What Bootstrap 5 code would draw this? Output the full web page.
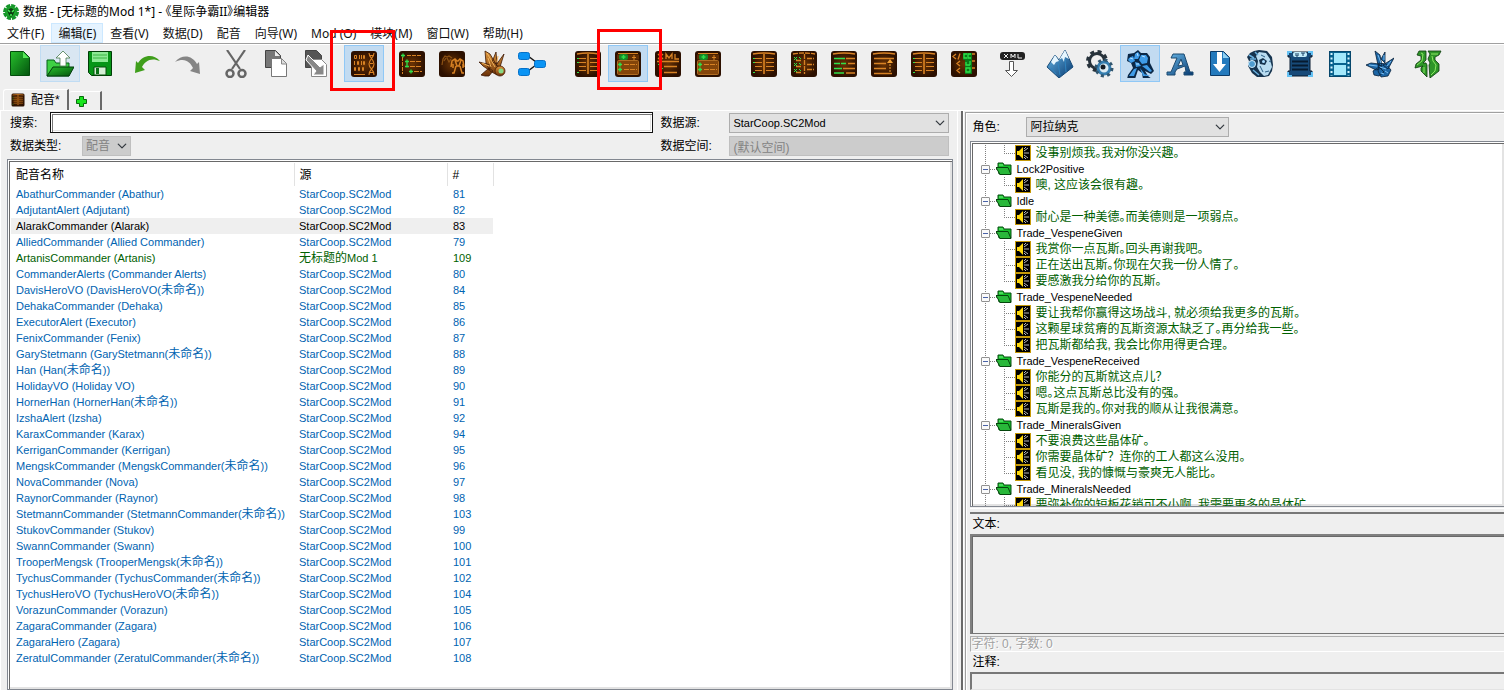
<!DOCTYPE html>
<html lang="zh-CN">
<head>
<meta charset="utf-8">
<meta name="viewport" content="width=device-width, initial-scale=1">
<title>数据 - [无标题的Mod 1*] - 《星际争霸II》编辑器</title>
<link href="https://cdn.jsdelivr.net/npm/bootstrap@5.3.0/dist/css/bootstrap.min.css" rel="stylesheet">
<style>
  :root { --face:#efefef; --shade:#a0a0a0; --dark:#696969; --light:#fff; }
  body { background:var(--face); color:#000; font:12px/16px "Liberation Sans","Noto Sans CJK SC",sans-serif; font-feature-settings:"palt"; }
  .ui-sans { font-family:"Noto Sans","Noto Sans CJK SC",sans-serif; }
  .zh { font-size:12px; }
  .full { font-feature-settings:normal; }
  .titlebar { height:23px; padding:0 3px; gap:4px; background:#fff; }
  .menubar { height:20px; background:#fff; }
  .menubar .nav-link { padding:1px 6px; border:1px solid transparent; color:#111; line-height:17px; }
  .menubar .nav-link.active { background:#e5f3ff; border-color:#cce8ff; }
  .toolbar { border-top:1px solid var(--shade); box-shadow:inset 0 1px #fff; padding:1px 0 7px; }
  .toolbar .gap-s { margin-left:8px; }
  .toolbar .gap-l { margin-left:16px; }
  .tool { position:relative; flex:none; width:40px; height:37px; padding:0; border:1px solid transparent; border-radius:0; display:flex; align-items:center; justify-content:center; }
  .tool svg { width:28px; height:28px; }
  .tool.hot { background:#d9e6f2; border-color:#c0dcf3; }
  .tool.on { background:#c2dbf1; border-color:#90c8f6; }
  .marker::after { content:""; position:absolute; z-index:5; left:-15px; top:-16px; width:65px; height:61px; border:3px solid #f00; pointer-events:none; }
  .marker.marker-b::after { left:-12px; top:-17px; }
  .tabs { padding-left:3px; height:21px; }
  .tabs .tab { border:0; background:none; height:21px; padding:0 7px; border-left:1px solid #fff; border-top:1px solid #fff; border-right:2px solid var(--dark); gap:6px; border-radius:3px 0 0 0; }
  .tabs .tab.extra { height:19px; align-self:flex-end; padding:0 12px 0 6px; border-left:0; }
  .work { border-top:1px solid #fff; min-height:0; }
  .pane-left { flex:956 1 0; min-width:0; padding:1px 0 0 6px; border-left:1px solid #fff; }
  .pane-right { flex:539 1 0; min-width:0; border-top:1px solid var(--shade); border-left:1px solid var(--shade); margin-top:1px; padding-left:4px; box-shadow:inset 1px 1px #fff; }
  .split { width:8px; border-left:1px solid #fff; background:linear-gradient(90deg,transparent 3px,#696969 3px 5px,#fff 5px 6px,transparent 6px); }
  .fields { display:grid; grid-template-columns:40px 32px 1fr 76px 220px; grid-template-rows:21px 20px; row-gap:3px; padding:0 4px 3px 3px; align-items:center; }
  .fields .wide { grid-column:2 / 4; }
  .fields .type-label { grid-column:1 / 3; }
  .search { height:21px; border:1px solid #111; outline:0; box-shadow:inset 1px 1px #fff,inset 2px 2px #777,inset -1px -1px #fff,inset -2px -2px #e3e3e3; padding:0 6px; font:inherit; background:#fff; }
  .combo.form-select { height:20px; padding:0 18px 0 3px; border:1px solid #adadad; border-radius:0; background-color:#e1e1e1; background-size:10px; background-position:right 3px center; font:inherit; line-height:16px; color:#000; }
  .combo.form-select:disabled { background-color:#ccc; border-color:#bfbfbf; color:#838383; opacity:1; }
  .combo.latin { font-size:11px; }
  .type-select.combo { width:49px; }
  .flat { height:20px; padding:0 3px; border:1px solid #bfbfbf; background:#ccc; color:#838383; border-radius:0; font:inherit; width:100%; }
  .fields .pad-l { padding-left:7px; }
  .well { background:#fff; border:1px solid #828790; box-shadow:inset 1px 1px #fff,inset 2px 2px #696969,inset -2px -2px #e3e3e3; padding:3px; overflow:hidden; }
  .voices { table-layout:fixed; width:482px; border-collapse:collapse; color:#0063b1; font-size:11px; }
  .voices th { height:23px; padding:0 5px; font-weight:400; font-size:12px; color:#000; border-right:1px solid #e2e2e2; }
  .voices td { height:16px; padding:0 5px; line-height:16px; white-space:nowrap; }
  .voices td + td + td { padding-left:6px; }
  .voices .sel { background:#efefef; color:#000; }
  .voices .own { color:#006000; }
  .voices .zh { line-height:1; }
  .tree-box { flex:362 1 0; min-height:0; border-right:0; padding:3px 0 2px 3px; }
  .role { height:28px; padding-left:2px; }
  .role label { width:54px; }
  .role .combo { width:203px; }
  .tree, .tree ul { list-style:none; margin:0; padding:0; }
  .tree-row { height:16px; display:flex; align-items:center; white-space:nowrap; }
  .tree > li { --dots:repeating-linear-gradient(#808080 0 1px,transparent 1px 2px); background:var(--dots) 11px 0/1px 100% no-repeat; }
  .tree-row.folder { font-size:11px; padding-left:7px; background:repeating-linear-gradient(90deg,#808080 0 1px,transparent 1px 2px) 16px 8px/7px 1px no-repeat; }
  .tree-row.folder svg { width:16px; height:16px; margin:0 4px 0 6px; flex:none; }
  .twist { width:9px; height:9px; padding:0; border:1px solid #919191; border-radius:1px; background:linear-gradient(#4a63a8,#4a63a8) center/5px 1px no-repeat,#fafafa; flex:none; }
  .tree ul .tree-row { padding-left:41px; color:#006000; background:var(--dots) 30px 0/1px 100% no-repeat,repeating-linear-gradient(90deg,#808080 0 1px,transparent 1px 2px) 30px 8px/11px 1px no-repeat; }
  .tree ul li:last-child .tree-row { background-size:1px 8px,11px 1px; }
  .tree ul svg { width:16px; height:16px; margin-right:4px; flex:none; }
  .bar { height:6px; margin-top:1px; border-top:1px solid #fff; border-bottom:2px solid #777; flex:none; }
  .cap { padding-left:2px; height:20px; line-height:20px; flex:none; }
  .memo { height:100px; flex:none; resize:none; display:block; width:100%; border:2px solid #808080; border-right:0; border-radius:0; border-bottom:1px solid #777; background:var(--face); box-shadow:inset 1px 1px #696969; }
  .count { height:16px; flex:none; margin-top:2px; border-top:1px solid #b0b0b0; border-left:1px solid #b0b0b0; border-bottom:1px solid #fff; color:#a0a0a0; line-height:14px; text-shadow:1px 1px #fff; }
  .note { height:18px; flex:none; border:2px solid #777; border-right:0; border-bottom:1px solid #e3e3e3; border-radius:0; background:var(--face); width:100%; display:block; }
  .o { fill:none; stroke:#d88224; } .g { fill:none; stroke:#2fe04a; }
</style>
</head>
<body class="vh-100 d-flex flex-column overflow-hidden">

<svg width="0" height="0" class="position-absolute" aria-hidden="true">
  <defs>
    <radialGradient id="brown"><stop offset="0" stop-color="#6a3304"/><stop offset="1" stop-color="#2c1000"/></radialGradient>
    <linearGradient id="green" x2="1" y2="1"><stop offset="0" stop-color="#27c02c"/><stop offset="1" stop-color="#03530e"/></linearGradient>
    <linearGradient id="blue" x2="1" y2="1"><stop offset="0" stop-color="#69b9ea"/><stop offset="1" stop-color="#06386f"/></linearGradient>
    <linearGradient id="gold" x2="0" y2="1"><stop offset="0" stop-color="#e29a3e"/><stop offset="1" stop-color="#6b3108"/></linearGradient>
  </defs>
  <symbol id="plate" viewBox="0 0 28 28"><rect x="1" y="1" width="26" height="26" rx="3" fill="url(#brown)"/></symbol>
  <symbol id="i-table" viewBox="0 0 28 28"><use href="#plate"/><path class="o" stroke-width="1.6" d="M3 4Q14 2 25 4M14 4V24"/><path class="o" stroke="#a8641f" d="M5 8.500h7M5 12.500h7M5 16.500h7M5 20.500h7M16 8.500h8M16 12.500h8M16 16.500h8M16 20.500h8"/><path class="g" d="M3 8.500h2M3 12.500h2M3 22.500h2"/></symbol>
  <symbol id="i-tree" viewBox="0 0 28 28"><use href="#plate"/><path class="o" d="M4.500 7V24M9 5.500h15" stroke-dasharray="4 1"/><path class="o" d="M12 11.500h12M12 16.500h12M16 21.500h8" stroke-dasharray="5 1"/><path class="g" stroke-width="1.300" d="M3 5.500h4M5 3.500v4M7 11.500h4M9 9.500v8M7 16.500h4M11 21.500h4M13 19.500v4"/></symbol>
  <symbol id="i-fields" viewBox="0 0 28 28"><use href="#plate"/><rect x="3.500" y="10.500" width="21" height="14" rx="1" fill="#84450a" stroke="#b06c22"/><path d="M3 4.500h22v5H3z" fill="#5e2c05"/><path class="o" d="M4 3.500h20M20 5v5M18 7.500h4"/><rect x="5" y="4" width="9" height="6" rx="2" fill="#168825"/><path class="g" stroke-width="1.500" d="M9.500 5v4M7.500 7h4M4 14.500h4M6 12.500v4M4 19.500h4M6 17.500v4"/><path class="o" stroke="#ef9d32" d="M10 14.500h13M10 19.500h13" stroke-dasharray="5 1"/></symbol>
  <symbol id="i-xml" viewBox="0 0 28 28"><use href="#plate"/><path class="o" stroke-width="1.300" d="M4 4l5 5M9 4l-5 5M12 9V4l3 4 3-4v5M21 4v5h4M3 11.500h22M10 16.500h13M10 22.500h13" /><path class="g" d="M4 14.500h3M5 18.500h4M6 22.500h2"/></symbol>
  <symbol id="i-dna" viewBox="0 0 28 28"><use href="#plate"/><path class="o" stroke="#c38540" d="M4.500 5.500h2v3h-2zM9.500 5v4M11.500 5v4M13.500 5.500h1v3h-1zM4.500 11v4M7.500 11.500h1v3h-1zM11.500 11v4M13.500 11.500h1v3h-1zM4.500 17.500h1v3h-1zM8.500 17.500h1v3h-1zM12.500 17.500h1v3h-1zM4 24.500h11"/><path class="o" stroke="#b88448" stroke-width="1.100" d="M19 3c0 5 5 6 5 11s-5 5-5 11M24 3c0 5-5 6-5 11s5 5 5 11"/><path class="o" stroke="#8f5a22" d="M20 5.500h3M20 13.500h3M20 22.500h3"/></symbol>
  <symbol id="i-units" viewBox="0 0 28 28"><use href="#plate"/><g class="o"><path stroke="#8d5215" stroke-width="1.200" d="M4 15l1-6 2-3 2 1 2-1 3 2M6 11l2-3M9 8l2 4 2-3"/><path stroke-width="1.500" d="M13 17l1-6 3-2 2 2h1l2-2 3 2 1 6M17 10l2 6h2l2-6M18 16l-2 7h-2M22 16l2 7h2M15 14v4M25 14v4"/></g></symbol>
  <symbol id="i-ship" viewBox="0 0 28 28"><g stroke="#3c1703" stroke-width=".8" fill="url(#gold)"><path d="M18 2l1 12-5-2zM26 4l-4 13-4-2zM1 12l12 3-2 5-6-4zM7 26l-4-1 8-7 4 3-4 5zM7 1l5 3 7 12 4 3-4 6-7-4-4-8z"/><circle cx="22" cy="21" r="5"/></g><path d="M9 3l8 14M10 8l3 9M4 13l7 3M20 6l-1 6" stroke="#f0b25c"/><circle cx="23" cy="21" r="2.500" fill="#87d985"/></symbol>
  <symbol id="i-flow" viewBox="0 0 28 28"><path d="M10 6l8 6M10 21l8-6" stroke="#111" stroke-width="1.500"/><g fill="#0a94f4" stroke="#0671c8"><rect x=".5" y="2.500" width="11" height="7" rx="2"/><rect x=".5" y="18.500" width="11" height="7" rx="2"/><rect x="16.500" y="10.500" width="11" height="7" rx="2"/></g></symbol>
  <symbol id="i-check" viewBox="0 0 28 28"><use href="#plate"/><path class="o" stroke-width="1.300" d="M3 4Q14 2 25 4M14.500 4V24M17 8.500h7M17 14.500h7M17 19.500h7M6 10.500h6M6 16.500h6M6 22.500h6" stroke-dasharray="5 1"/><path class="g" d="M4 7l3 3M7 7l-3 3M4 13l3 3M7 13l-3 3M4 19l3 3M7 19l-3 3M9 7l2 2M9 13l2 2M9 19l2 2"/></symbol>
  <symbol id="i-diff" viewBox="0 0 28 28"><use href="#plate"/><path class="o" stroke-width="1.500" d="M3 4Q14 2 25 4M16 8.500h9M18 13.500h7M13 18.500h12M16 23h9"/><path class="g" stroke-width="1.700" d="M4 8.500h11M4 13.500h6M11 13.500h5M4 18.500h8M4 23h10"/></symbol>
  <symbol id="i-up" viewBox="0 0 28 28"><use href="#plate"/><path class="o" stroke-width="1.500" d="M3 4Q14 2 25 4M4 8.500h20M4 13.500h12M4 18.500h12M4 23.500h18"/><path d="M20 22V11" stroke="#f3a338" stroke-dasharray="2 1"/><path d="M17 13l3-4 3 4z" fill="#f3a338"/></symbol>
  <symbol id="i-code" viewBox="0 0 28 28"><use href="#plate"/><path class="o" stroke-width="1.300" d="M6 4L3 6.500 6 9M10 3.500L8 9.500M10 11l-3 2.500L10 16M10 18l-3 2.500L10 23M22 4h3M22 11h3M22 18h3"/><path fill="#087a19" d="M13 3h9v7h-9zM15 10h7v7h-7zM15 17h7v7h-7z"/><path class="g" stroke-width="1.300" d="M17 4h-3v4h3M21 4h-3v4h3M16 12v3h4M20 11v4M16 18v4h4v-4z"/></symbol>
  <symbol id="i-new" viewBox="0 0 28 28"><path d="M4.500 1.500h13l6 6v18h-19z" fill="url(#green)" stroke="#034d0c"/><path d="M17 2v6h6z" fill="#55e858"/></symbol>
  <symbol id="i-open" viewBox="0 0 28 28"><path d="M1 10h7l2 3h13v13H1z" fill="#3ed044" stroke="#07601a"/><path d="M7 17h21l-5 9H1z" fill="url(#green)" stroke="#033e0c"/><path d="M17 1l7 7h-4v8h-6V8h-4z" fill="#fff" stroke="#477a4c" stroke-width=".8"/></symbol>
  <symbol id="i-save" viewBox="0 0 28 28"><path d="M2.500 1.500h23v24h-20l-3-3z" fill="#079517" stroke="#003d07"/><path d="M6 2h16v10H6z" fill="#8de994"/><path d="M7 5h14M7 8h14" stroke="#3bb545"/><path d="M8 17h12v8H8z" fill="#d5efd5" stroke="#064c0b"/><path d="M10 18h3v6h-3z" fill="#087014"/></symbol>
  <symbol id="i-undo" viewBox="0 0 28 28"><path d="M2 11L1 23l10-3-3-3c3-6 9-10 18-6C19 3 9 5 4 13z" fill="#3f9e1b"/></symbol>
  <symbol id="i-redo" viewBox="0 0 28 28"><path d="M25 12l1 12-10-3 3-3c-3-6-8-11-18-6C8 4 18 5 23 14z" fill="#858585"/></symbol>
  <symbol id="i-cut" viewBox="0 0 28 28"><g fill="none" stroke="#666"><path stroke-width="2.200" d="M5 0l13 19M23 0L10 19"/><circle cx="8" cy="23.500" r="3.500" stroke-width="2.500"/><circle cx="20" cy="23.500" r="3.500" stroke-width="2.500"/></g></symbol>
  <symbol id="i-copy" viewBox="0 0 28 28"><path d="M3.500 .5h10l5 5v12h-15z" fill="#777" stroke="#444"/><path d="M13 1v5h5z" fill="#eee"/><path d="M9.500 8.500h10l5 5v13h-15z" fill="#fff" stroke="#777"/><path d="M19.500 9v5h5" fill="#ddd" stroke="#888"/></symbol>
  <symbol id="i-paste" viewBox="0 0 28 28"><path d="M3.500 .5h11l5 5v12h-16z" fill="#555" stroke="#444"/><path d="M9.500 9.500h10l5 5v12h-15z" fill="#fff" stroke="#888"/><path d="M6 5l12 12 4-3v11H11l3-4L4 10z" fill="#888" stroke="#fff"/></symbol>
  <symbol id="i-xdown" viewBox="0 0 28 28"><rect x="2" y="2" width="25" height="8" rx="3" fill="#222"/><path d="M6 4l4 4M10 4l-4 4M13 8V4l2 3 2-3v4M20 4v4h4" fill="none" stroke="#eee"/><path d="M11.500 11.500h4v9h4l-6 6-6-6h4z" fill="#fff" stroke="#555"/></symbol>
  <symbol id="i-terrain" viewBox="0 0 28 28"><path d="M1 17L9 5l4 5 6-10 8 17-14 11z" fill="url(#blue)" stroke="#174b79"/><path d="M5 12l4-7 4 6-3 1-2 3zM13 10l6-10 4 9-4-2-1 5-2-4z" fill="#e6f6ff"/><path d="M5 18l5 6M12 13l2 12M19 9l1 13" stroke="#2f83bf"/></symbol>
  <symbol id="i-gears" viewBox="0 0 28 28"><circle cx="11" cy="11" r="7.500" fill="none" stroke="#27323b" stroke-width="3"/><circle cx="11" cy="11" r="9.500" fill="none" stroke="#27323b" stroke-width="3" stroke-dasharray="4 3.500"/><circle cx="18" cy="18" r="6" fill="#dcecf4" stroke="#357eb0" stroke-width="3"/><circle cx="18" cy="18" r="8" fill="none" stroke="#31566f" stroke-width="3" stroke-dasharray="3 3.300"/><circle cx="17" cy="17" r="2.500" fill="#151d25"/></symbol>
  <symbol id="i-marine" viewBox="0 0 28 28"><path d="M8 3l4-3 3 3 6 0 3 4 0 6 4 8-3 3-6-3 3 5 4 3H17l-1-6-4-3-3 9H1l1-4 5-7-2-5-4-2 1-7z" fill="#0b2847"/><path d="M9 4l3-2 2 3-2 4-4 0zM3 8l4-2 2 5-4 2-3-3zM15 5l5 0 2 3-1 5-5 1-3-4zM9 12l4 1 2 3-5 1zM16 16l5-1 5 6-2 1zM8 19l3-1-3 8H3zM14 18l6 8h-3zM19 24l5 2h-4z" fill="#3f9ce8"/><path d="M11 3l1 3M4 8l3 1M16 6l3 1M10 14h3" stroke="#b9e1ff"/></symbol>
  <symbol id="i-letter" viewBox="0 0 28 28"><path d="M7 4l-2 4h6L5 22H1v3h8v-3l2-3 8-3 1 6h-2v3h9v-3h-3L18 4zM15 9l2 6-5 1z" fill="url(#blue)" stroke="#1d4a70" fill-rule="evenodd"/></symbol>
  <symbol id="i-import" viewBox="0 0 28 28"><path d="M4.500 1.500h13l6 6v18h-19z" fill="#247abd" stroke="#0c3b68"/><path d="M17 2v6h6z" fill="#8fd0f3"/><path d="M11 2h5v12h4l-6.500 8L7 14h4z" fill="#fff"/></symbol>
  <symbol id="i-face" viewBox="0 0 28 28"><path d="M4 3l4-2 5-1 8 1 5 6 1 8-1 6-3 5-5 1-7 0-5-4-4-7 1-5-2-4z" fill="#16344f"/><path d="M13 2l7 1 4 6 2 8-2 4-2 4-4 1-4-4-3-5 1-6-2-5z" fill="#b9dcf0"/><path d="M13 10l4-2 4 3-2 4-5-1z" fill="#16334d"/><circle cx="17.500" cy="11.500" r="1.500" fill="#a7dcff"/><path d="M23 11l2 1M19 22l4-1M15 5l4 2M14 16l3 6" stroke="#2c5f86"/><circle cx="6" cy="14" r="3.500" fill="#4f9ccf" stroke="#d4efff"/><path d="M3 5l5 3M9 2l3 3M7 20l6 5M4 9h6" stroke="#69afdd" stroke-width="1.500"/></symbol>
  <symbol id="i-ui" viewBox="0 0 28 28"><path d="M2 2h24v5h-2v14h2v5H2v-5h2V7H2z" fill="#174a79" stroke="#071b31"/><rect x="7" y="2" width="14" height="5" rx="2" fill="#c5ecfb"/><path d="M10 3v3h2V3M15 3h4M17 3v3" stroke="#173e63" fill="none"/><path d="M6 11.500h16M6 15.500h16M6 19.500h16" stroke="#061a30" stroke-width="2"/><path d="M2 5V2h4M22 2h4v3M2 22v4h4M22 26h4v-4" stroke="#64c1f3" stroke-width="2" fill="none"/></symbol>
  <symbol id="i-film" viewBox="0 0 28 28"><rect x="3.500" y="1.500" width="21" height="25" fill="#09638f" stroke="#06476c"/><path d="M8 3h12v10H8zM8 15h12v10H8z" fill="#a3e8fb"/><path d="M5.500 3v23M22.500 3v23" stroke="#d8f5ff" stroke-width="2" stroke-dasharray="2 2.500"/></symbol>
  <symbol id="i-bug" viewBox="0 0 28 28"><g fill="#1d66a5" stroke="#061f3a" stroke-width=".8"><path d="M9 1l5 4 2 11-4-1zM19 2l0 11-4-4zM28 8l-6 11-5-4zM0 15l5-2 8 1 3 4-6 2zM8 25l-1-4 6-4 5 5-5 4zM13 13l7 1 5 6-3 6-7 1-3-6z"/></g><path d="M12 5l3 8M3 15l8 1M18 5v5M25 11l-4 5M14 17l6 2M19 21l3 2M15 23l3 1" stroke="#79bdf0"/></symbol>
  <symbol id="i-st" viewBox="0 0 28 28"><g fill="#2e9628" stroke="#0c3a0b" stroke-width=".8"><path d="M5 1h7v9l-3 3h3l1 2v12l-6-6V18l2-2-8 2 1-4 5-4V6L3 5zM14 1h13l-2 4-4 2v3l4 4v7l-9 7-1-13 1-2-2-4 2-5z"/></g><path d="M7 3l2 1-1 7-5 4M10 17v6M17 4h7M18 6l1 5 3 4-1 6-4 4" fill="none" stroke="#8de663"/></symbol>
  <symbol id="i-folder" viewBox="0 0 16 16"><path d="M2 2h5l1 2h7v9H3L2 7z" fill="#16c12b" stroke="#064d10"/><path d="M0 6.500h12l3 7H4z" fill="#29b83a" stroke="#05460d"/><path d="M3 4h4" stroke="#7cf58a"/></symbol>
  <symbol id="i-sound" viewBox="0 0 16 16"><rect x=".5" y=".5" width="15" height="15" fill="#000" stroke="#c69a08"/><path d="M2 6h2l4-4v12l-4-4H2z" fill="#ffd90a"/><path d="M9 6l4-3M9 8h5M9 10l4 3M9 4l2-2M9 12l2 2" stroke="#bbb"/></symbol>
</svg>

<header>
  <div class="titlebar ui-sans d-flex align-items-center">
    <svg width="16" height="16" viewBox="0 0 16 16" aria-hidden="true"><circle cx="8" cy="8" r="6" fill="#1da52a"/><circle cx="8" cy="8" r="6.500" fill="none" stroke="#15962a" stroke-width="3" stroke-dasharray="4 1"/><path d="M4 6l4-2 4 2-2 5-2 2-2-2z" fill="#0b3f12"/><path d="M5 6l2 2M11 6L9 8M8 10v2" stroke="#45ef55" stroke-width="1.500"/></svg>
    <span>数据 - [无标题的Mod 1*] - 《星际争霸II》编辑器</span>
  </div>
  <nav class="menubar ui-sans nav flex-nowrap" aria-label="主菜单">
    <a class="nav-link" href="#">文件(F)</a><a class="nav-link active" href="#">编辑(E)</a><a class="nav-link" href="#">查看(V)</a><a class="nav-link" href="#">数据(D)</a><a class="nav-link" href="#">配音</a><a class="nav-link" href="#">向导(W)</a><a class="nav-link" href="#">Mod (O)</a><a class="nav-link" href="#">模块(M)</a><a class="nav-link" href="#">窗口(W)</a><a class="nav-link" href="#">帮助(H)</a>
  </nav>
  <div class="toolbar d-flex" role="toolbar" aria-label="工具栏">
    <button class="btn tool" aria-label="新建"><svg><use href="#i-new"/></svg></button>
    <button class="btn tool hot" aria-label="打开"><svg><use href="#i-open"/></svg></button>
    <button class="btn tool" aria-label="保存"><svg><use href="#i-save"/></svg></button>
    <button class="btn tool gap-s" aria-label="撤销"><svg><use href="#i-undo"/></svg></button>
    <button class="btn tool" aria-label="重做"><svg><use href="#i-redo"/></svg></button>
    <button class="btn tool gap-s" aria-label="剪切"><svg><use href="#i-cut"/></svg></button>
    <button class="btn tool" aria-label="复制"><svg><use href="#i-copy"/></svg></button>
    <button class="btn tool" aria-label="粘贴"><svg><use href="#i-paste"/></svg></button>
    <button class="btn tool on marker gap-s" aria-label="原始数据"><svg><use href="#i-dna"/></svg></button>
    <button class="btn tool gap-s" aria-label="树状列表"><svg><use href="#i-tree"/></svg></button>
    <button class="btn tool" aria-label="单位"><svg><use href="#i-units"/></svg></button>
    <button class="btn tool" aria-label="模型"><svg><use href="#i-ship"/></svg></button>
    <button class="btn tool" aria-label="关系"><svg><use href="#i-flow"/></svg></button>
    <button class="btn tool gap-l" aria-label="表格"><svg><use href="#i-table"/></svg></button>
    <button class="btn tool on marker marker-b" aria-label="详细"><svg><use href="#i-fields"/></svg></button>
    <button class="btn tool" aria-label="XML"><svg><use href="#i-xml"/></svg></button>
    <button class="btn tool" aria-label="字段"><svg><use href="#i-fields"/></svg></button>
    <button class="btn tool gap-l" aria-label="表格视图"><svg><use href="#i-table"/></svg></button>
    <button class="btn tool" aria-label="选项"><svg><use href="#i-check"/></svg></button>
    <button class="btn tool" aria-label="比较"><svg><use href="#i-diff"/></svg></button>
    <button class="btn tool" aria-label="上移"><svg><use href="#i-up"/></svg></button>
    <button class="btn tool" aria-label="分栏"><svg><use href="#i-table"/></svg></button>
    <button class="btn tool" aria-label="代码"><svg><use href="#i-code"/></svg></button>
    <button class="btn tool gap-s" aria-label="导出XML"><svg><use href="#i-xdown"/></svg></button>
    <button class="btn tool gap-s" aria-label="地形"><svg><use href="#i-terrain"/></svg></button>
    <button class="btn tool" aria-label="触发器"><svg><use href="#i-gears"/></svg></button>
    <button class="btn tool on" aria-label="数据"><svg><use href="#i-marine"/></svg></button>
    <button class="btn tool" aria-label="文本"><svg><use href="#i-letter"/></svg></button>
    <button class="btn tool" aria-label="导入"><svg><use href="#i-import"/></svg></button>
    <button class="btn tool" aria-label="AI"><svg><use href="#i-face"/></svg></button>
    <button class="btn tool" aria-label="界面"><svg><use href="#i-ui"/></svg></button>
    <button class="btn tool" aria-label="过场"><svg><use href="#i-film"/></svg></button>
    <button class="btn tool" aria-label="动作"><svg><use href="#i-bug"/></svg></button>
    <button class="btn tool gap-s" aria-label="测试"><svg><use href="#i-st"/></svg></button>
  </div>
  <div class="tabs d-flex">
    <button class="tab d-flex align-items-center"><svg width="14" height="14"><use href="#i-table"/></svg>配音*</button>
    <button class="tab extra d-flex align-items-center" aria-label="新标签"><svg width="13" height="13" viewBox="0 0 13 13"><path d="M4.500 1.500h4v3h3v4h-3v3h-4v-3h-3v-4h3z" fill="#19e51e" stroke="#086b0d"/></svg></button>
  </div>
</header>

<main class="work d-flex flex-grow-1">
  <section class="pane-left d-flex flex-column">
    <div class="fields">
      <label for="q">搜索:</label>
      <input id="q" class="search wide" type="text">
      <label for="src" class="pad-l">数据源:</label>
      <select id="src" class="form-select combo latin"><option>StarCoop.SC2Mod</option></select>
      <label for="kind" class="type-label">数据类型:</label>
      <select id="kind" class="form-select combo type-select" disabled><option>配音</option></select>
      <label for="space" class="pad-l">数据空间:</label>
      <input id="space" class="flat" type="text" value="(默认空间)" disabled>
    </div>
    <div class="well flex-grow-1">
      <table class="voices">
        <colgroup><col style="width:283px"><col style="width:153px"><col style="width:46px"></colgroup>
        <thead><tr><th scope="col">配音名称</th><th scope="col">源</th><th scope="col">#</th></tr></thead>
        <tbody>
          <tr><td>AbathurCommander (Abathur)</td><td>StarCoop.SC2Mod</td><td>81</td></tr>
          <tr><td>AdjutantAlert (Adjutant)</td><td>StarCoop.SC2Mod</td><td>82</td></tr>
          <tr class="sel"><td>AlarakCommander (Alarak)</td><td>StarCoop.SC2Mod</td><td>83</td></tr>
          <tr><td>AlliedCommander (Allied Commander)</td><td>StarCoop.SC2Mod</td><td>79</td></tr>
          <tr class="own"><td>ArtanisCommander (Artanis)</td><td><span class="zh">无标题的</span>Mod 1</td><td>109</td></tr>
          <tr><td>CommanderAlerts (Commander Alerts)</td><td>StarCoop.SC2Mod</td><td>80</td></tr>
          <tr><td>DavisHeroVO (DavisHeroVO(<span class="zh">未命名</span>))</td><td>StarCoop.SC2Mod</td><td>84</td></tr>
          <tr><td>DehakaCommander (Dehaka)</td><td>StarCoop.SC2Mod</td><td>85</td></tr>
          <tr><td>ExecutorAlert (Executor)</td><td>StarCoop.SC2Mod</td><td>86</td></tr>
          <tr><td>FenixCommander (Fenix)</td><td>StarCoop.SC2Mod</td><td>87</td></tr>
          <tr><td>GaryStetmann (GaryStetmann(<span class="zh">未命名</span>))</td><td>StarCoop.SC2Mod</td><td>88</td></tr>
          <tr><td>Han (Han(<span class="zh">未命名</span>))</td><td>StarCoop.SC2Mod</td><td>89</td></tr>
          <tr><td>HolidayVO (Holiday VO)</td><td>StarCoop.SC2Mod</td><td>90</td></tr>
          <tr><td>HornerHan (HornerHan(<span class="zh">未命名</span>))</td><td>StarCoop.SC2Mod</td><td>91</td></tr>
          <tr><td>IzshaAlert (Izsha)</td><td>StarCoop.SC2Mod</td><td>92</td></tr>
          <tr><td>KaraxCommander (Karax)</td><td>StarCoop.SC2Mod</td><td>94</td></tr>
          <tr><td>KerriganCommander (Kerrigan)</td><td>StarCoop.SC2Mod</td><td>95</td></tr>
          <tr><td>MengskCommander (MengskCommander(<span class="zh">未命名</span>))</td><td>StarCoop.SC2Mod</td><td>96</td></tr>
          <tr><td>NovaCommander (Nova)</td><td>StarCoop.SC2Mod</td><td>97</td></tr>
          <tr><td>RaynorCommander (Raynor)</td><td>StarCoop.SC2Mod</td><td>98</td></tr>
          <tr><td>StetmannCommander (StetmannCommander(<span class="zh">未命名</span>))</td><td>StarCoop.SC2Mod</td><td>103</td></tr>
          <tr><td>StukovCommander (Stukov)</td><td>StarCoop.SC2Mod</td><td>99</td></tr>
          <tr><td>SwannCommander (Swann)</td><td>StarCoop.SC2Mod</td><td>100</td></tr>
          <tr><td>TrooperMengsk (TrooperMengsk(<span class="zh">未命名</span>))</td><td>StarCoop.SC2Mod</td><td>101</td></tr>
          <tr><td>TychusCommander (TychusCommander(<span class="zh">未命名</span>))</td><td>StarCoop.SC2Mod</td><td>102</td></tr>
          <tr><td>TychusHeroVO (TychusHeroVO(<span class="zh">未命名</span>))</td><td>StarCoop.SC2Mod</td><td>104</td></tr>
          <tr><td>VorazunCommander (Vorazun)</td><td>StarCoop.SC2Mod</td><td>105</td></tr>
          <tr><td>ZagaraCommander (Zagara)</td><td>StarCoop.SC2Mod</td><td>106</td></tr>
          <tr><td>ZagaraHero (Zagara)</td><td>StarCoop.SC2Mod</td><td>107</td></tr>
          <tr><td>ZeratulCommander (ZeratulCommander(<span class="zh">未命名</span>))</td><td>StarCoop.SC2Mod</td><td>108</td></tr>
        </tbody>
      </table>
    </div>
  </section>
  <div class="split ms-1"></div>
  <section class="pane-right d-flex flex-column">
    <div class="role d-flex align-items-center">
      <label for="role">角色:</label>
      <select id="role" class="form-select combo"><option>阿拉纳克</option></select>
    </div>
    <div class="well tree-box">
      <ul class="tree">
        <li><ul><li><div class="tree-row"><svg><use href="#i-sound"/></svg>没事别烦我。我对你没兴趣。</div></li></ul></li>
        <li><div class="tree-row folder"><button class="twist" aria-label="折叠"></button><svg><use href="#i-folder"/></svg>Lock2Positive</div>
          <ul><li><div class="tree-row"><svg><use href="#i-sound"/></svg>噢, 这应该会很有趣。</div></li></ul></li>
        <li><div class="tree-row folder"><button class="twist" aria-label="折叠"></button><svg><use href="#i-folder"/></svg>Idle</div>
          <ul><li><div class="tree-row"><svg><use href="#i-sound"/></svg>耐心是一种美德。而美德则是一项弱点。</div></li></ul></li>
        <li><div class="tree-row folder"><button class="twist" aria-label="折叠"></button><svg><use href="#i-folder"/></svg>Trade_VespeneGiven</div>
          <ul><li><div class="tree-row"><svg><use href="#i-sound"/></svg>我赏你一点瓦斯。回头再谢我吧。</div></li>
            <li><div class="tree-row"><svg><use href="#i-sound"/></svg>正在送出瓦斯。你现在欠我一份人情了。</div></li>
            <li><div class="tree-row"><svg><use href="#i-sound"/></svg>要感激我分给你的瓦斯。</div></li></ul></li>
        <li><div class="tree-row folder"><button class="twist" aria-label="折叠"></button><svg><use href="#i-folder"/></svg>Trade_VespeneNeeded</div>
          <ul><li><div class="tree-row"><svg><use href="#i-sound"/></svg>要让我帮你赢得这场战斗, 就必须给我更多的瓦斯。</div></li>
            <li><div class="tree-row"><svg><use href="#i-sound"/></svg>这颗星球贫瘠的瓦斯资源太缺乏了。再分给我一些。</div></li>
            <li><div class="tree-row"><svg><use href="#i-sound"/></svg>把瓦斯都给我, 我会比你用得更合理。</div></li></ul></li>
        <li><div class="tree-row folder"><button class="twist" aria-label="折叠"></button><svg><use href="#i-folder"/></svg>Trade_VespeneReceived</div>
          <ul><li><div class="tree-row full"><svg><use href="#i-sound"/></svg>你能分的瓦斯就这点儿？</div></li>
            <li><div class="tree-row"><svg><use href="#i-sound"/></svg>嗯。这点瓦斯总比没有的强。</div></li>
            <li><div class="tree-row"><svg><use href="#i-sound"/></svg>瓦斯是我的。你对我的顺从让我很满意。</div></li></ul></li>
        <li><div class="tree-row folder"><button class="twist" aria-label="折叠"></button><svg><use href="#i-folder"/></svg>Trade_MineralsGiven</div>
          <ul><li><div class="tree-row"><svg><use href="#i-sound"/></svg>不要浪费这些晶体矿。</div></li>
            <li><div class="tree-row full"><svg><use href="#i-sound"/></svg>你需要晶体矿？连你的工人都这么没用。</div></li>
            <li><div class="tree-row"><svg><use href="#i-sound"/></svg>看见没, 我的慷慨与豪爽无人能比。</div></li></ul></li>
        <li><div class="tree-row folder"><button class="twist" aria-label="折叠"></button><svg><use href="#i-folder"/></svg>Trade_MineralsNeeded</div>
          <ul><li><div class="tree-row"><svg><use href="#i-sound"/></svg>要弥补你的短板花销可不小啊, 我需要更多的晶体矿。</div></li>
            <li><div class="tree-row"></div></li></ul></li>
      </ul>
    </div>
    <div class="bar"></div>
    <label for="txt" class="cap">文本:</label>
    <textarea id="txt" class="memo" readonly></textarea>
    <div class="count">字符: 0, 字数: 0</div>
    <label for="note" class="cap">注释:</label>
    <input id="note" class="note" type="text" readonly>
  </section>
</main>
<script src="https://cdn.jsdelivr.net/npm/bootstrap@5.3.0/dist/js/bootstrap.bundle.min.js"></script>
</body>
</html>
